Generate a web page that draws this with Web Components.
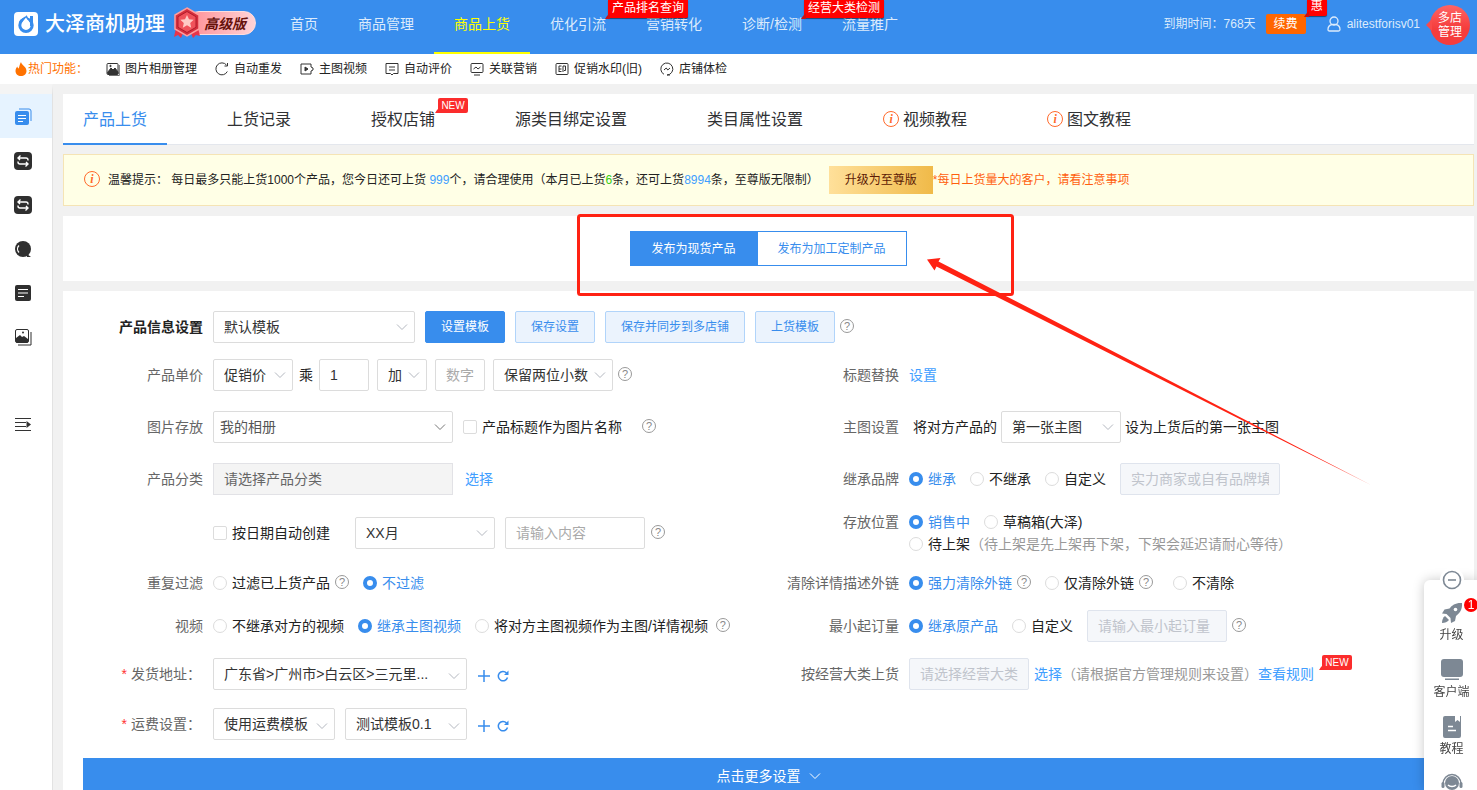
<!DOCTYPE html>
<html lang="zh-CN">
<head>
<meta charset="utf-8">
<title>大泽商机助理</title>
<style>
  html, body { margin: 0; height: 100%; overflow: hidden; }
  body {
    font: 14px/20px "Liberation Sans", "Noto Sans CJK SC", sans-serif;
    color: #222;
    background: #f1f1f1;
    --blue: #388ded;
    --link: #409eff;
    --line: #dcdcdc;
  }
</style>
</head>
<body>
<dz-app></dz-app>

<script>
const BASE = `
  *, *::before, *::after { box-sizing: border-box; }
  button, input, select { font: inherit; color: inherit; margin: 0; }
  button { cursor: pointer; border: 0; background: none; padding: 0; }
  a { color: inherit; text-decoration: none; }
  svg { display: block; flex: none; }
`;

function define(name, css, html, setup) {
  customElements.define(name, class extends HTMLElement {
    connectedCallback() {
      if (this.shadowRoot) return;
      const root = this.attachShadow({ mode: 'open' });
      const t = document.createElement('template');
      const body = typeof html === 'function' ? html(this) : html;
      t.innerHTML = `<style>${BASE}${css}</style>${body}`;
      root.append(t.content.cloneNode(true));
      if (setup) setup(this, root);
    }
  });
}

/* ---------- small parts ---------- */

define('dz-help', `
  :host { display: block; flex: none; width: 14px; height: 16px; }
  span { display: block; width: 14px; height: 14px; border: 1px solid #999; border-radius: 50%;
         font-size: 11px; line-height: 12px; text-align: center; color: #888; }
`, `<span title="帮助">?</span>`);

define('dz-info', `
  :host { display: block; flex: none; width: 16px; height: 18px; }
  span { display: block; width: 16px; height: 16px; border: 1px solid #ff6a2b; border-radius: 50%;
         font: italic bold 12px/14px "Liberation Serif", serif; text-align: center; color: #ff6a2b; }
`, `<span>i</span>`);

define('dz-flag', `
  :host { display: block; position: relative; padding: 0 4px; background: #f00; color: #fff; border-radius: 0 0 2px 0;
          font-size: 12px; line-height: 18px; white-space: nowrap; box-shadow: 0 1px 1px rgba(0,0,0,.5); }
  :host([new]) { background: #fb2c2c; border-radius: 2px; line-height: 15px; width: 30px; font-size: 10px; box-shadow: none; text-align: center; padding: 0; }
  i { position: absolute; left: -3px; bottom: -1px; border: 3px solid transparent; border-right-color: #c11; border-bottom-color: #c11; border-left-width: 2px; }
  :host([new]) i { border-right-color: #fb2c2c; border-bottom-color: #fb2c2c; z-index: -1; bottom: 0; }
  slot { position: relative; }
`, `<i></i><slot></slot>`);

define('dz-select', `
  :host { display: block; position: relative; flex: none; width: 120px; height: 32px; }
  select { appearance: none; width: 100%; height: 32px; padding: 0 0 0 10px; border: 1px solid var(--line);
           border-radius: 2px; background: #fff; color: #333; outline: 0; }
  svg { position: absolute; right: 7px; top: 10px; pointer-events: none; fill: none; stroke: #b4b8c0; }
  :host([low]) svg { top: 12px; }
  :host([album]) select { padding-left: 6px; color: #555; }
  :host([album]) svg { stroke: #777; }
`, el => `<select aria-label="${el.getAttribute('label')}"><option>${el.getAttribute('value')}</option></select>
  <svg width="12" height="12" viewBox="0 0 12 12"><path d="M1 3.5 6 8.5 11 3.5"/></svg>`);

define('dz-input', `
  :host { display: block; flex: none; width: 140px; height: 32px; }
  input { width: 100%; height: 32px; padding: 0 10px; border: 1px solid var(--line); border-radius: 2px; background: #fff; color: #333; outline: 0; }
  input::placeholder { color: #aaa; opacity: 1; }
  input:disabled { background: #f5f7fa; border-color: #dfe4ed; }
  input:disabled::placeholder { color: #c0c4cc; }
  :host([filled]) input { background: #f4f4f4; border-color: #e2e2e6; border-radius: 0; }
  :host([filled]) input::placeholder { color: #666; }
`, el => `<input type="text" aria-label="${el.getAttribute('label')}" value="${el.getAttribute('value') || ''}"
   placeholder="${el.getAttribute('placeholder') || ''}" ${el.hasAttribute('disabled') ? 'disabled' : ''}>`);

const choice = (type) => [`
  :host { display: block; flex: none; }
  label { display: flex; align-items: center; gap: 5px; white-space: nowrap; cursor: pointer; }
  input { appearance: none; flex: none; width: 14px; height: 14px; border: 1px solid var(--line); background: #fff;
          border-radius: ${type === 'radio' ? '50%' : '2px'}; }
  input:checked { border: 4px solid var(--blue); }
  input:checked + span { color: var(--blue); }
`, el => `<label><input type="${type}" ${el.hasAttribute('checked') ? 'checked' : ''}><span><slot></slot></span></label>`];

define('dz-check', ...choice('checkbox'));
define('dz-radio', ...choice('radio'), (el, root) => {
  root.querySelector('input').addEventListener('change', () => {
    for (const other of el.closest('dz-field').querySelectorAll('dz-radio'))
      if (other !== el) other.shadowRoot.querySelector('input').checked = false;
  });
});

define('dz-button', `
  :host { display: block; flex: none; }
  button { height: 32px; padding: 0 15px; border: 1px solid #b1d4fa; border-radius: 2px; background: #ebf3fd;
           color: var(--blue); font-size: 12px; line-height: 18px; white-space: nowrap; }
  :host([primary]) button { background: var(--blue); border-color: var(--blue); color: #fff; }
`, `<button type="button"><slot></slot></button>`);

define('dz-link', `
  :host { display: block; flex: none; color: var(--link); }
`, `<a href="#"><slot></slot></a>`);

define('dz-add', `
  :host { display: flex; gap: 6px; padding-top: 3px; }
  svg { fill: none; stroke: var(--blue); }
`, `<button type="button" aria-label="新增"><svg width="14" height="14" viewBox="0 0 14 14"><path stroke-width="1.500" d="M7 1v12M1 7h12"/></svg></button>
  <button type="button" aria-label="刷新"><svg width="12" height="14" viewBox="0 0 12 14"><path stroke-width="1.500" d="M10.500 8.500A4.700 4.700 0 1 1 9.500 4"/><path stroke="none" fill="#388ded" d="M11.500 1.500v4.500H7z"/></svg></button>`);

define('dz-field', `
  :host { display: block; min-width: 0; }
  .f { display: flex; align-items: center; height: 32px; }
  .l { flex: none; width: var(--label, 150px); padding-right: 10px; text-align: right; color: #666; white-space: nowrap; }
  :host([strong]) .l { font-weight: bold; color: #222; }
  :host([required]) .l { padding-right: 12px; }
  .l b { color: #f33; font-weight: normal; margin-right: 4px; }
  :host([double]) .f { align-items: flex-start; }
  :host([double]) .l { line-height: 22px; margin-top: -6px; }
  :host([double]) .c { margin-top: -6px; }
  .c { display: flex; align-items: center; white-space: nowrap; }
`, el => {
  const t = el.getAttribute('label') || '';
  const star = el.hasAttribute('required') ? '<b>*</b>' : '';
  return `<div class="f" role="group" aria-label="${t}"><div class="l">${star}${t}</div><div class="c"><slot></slot></div></div>`;
});

/* ---------- header ---------- */

define('dz-header', `
  :host { display: flex; align-items: center; height: 54px; background: var(--blue); color: #dcebfc; flex: none; }
  .logo { margin: 0 0 6px 14px; }
  h1 { margin: 0 0 6px 7px; font-size: 20px; line-height: 24px; font-weight: 500; color: #fff; white-space: nowrap; }
  .vip { display: flex; align-items: center; position: relative; margin: 0 0 8px 8px; width: 97px; height: 32px; flex: none; }
  .vip span { margin-left: 14px; padding: 0 9px 0 16px; height: 24px; border-radius: 12px; border: 1px solid #fdd;
    background: linear-gradient(90deg, #ff8f96, #ffd3d6); color: #66120c; font: italic bold 14px/22px "Noto Sans CJK SC", sans-serif; }
  .vip svg { position: absolute; left: 0; top: 0; }
  nav { display: flex; flex: none; height: 54px; }
  nav > div { position: relative; }
  nav a { display: block; padding: 0 20px; line-height: 48px; height: 54px; white-space: nowrap; }
  nav a.on { color: #ff0; border-bottom: 2px solid #ff0; }
  nav dz-flag { position: absolute; left: calc(100% - 18px); top: 0; z-index: 1; line-height: 16px; padding-bottom: 2px; }
  .right { display: flex; align-items: center; align-self: flex-start; margin-left: auto; font-size: 12px; height: 48px; white-space: nowrap; }
  .pay { position: relative; margin-left: 10px; }
  .pay button { display: block; width: 40px; height: 20px; border-radius: 2px; background: #f60; color: #fff; line-height: 20px; }
  .pay dz-flag { position: absolute; left: 41px; top: -14px; line-height: 12px; padding-bottom: 4px; }
  .user { display: flex; align-items: center; gap: 6px; margin-left: 21px; }
  .shops { position: relative; width: 40px; height: 40px; margin: 2px 7px 0 10px; border-radius: 50%; color: #fff; line-height: 14px;
    background: linear-gradient(#ff6464, #f53c3c 60%); }
  .shops::before { content: ""; position: absolute; left: -4px; top: 14px; border: 6px solid transparent; border-left: 0; border-right-color: #f94a4a; }
  .shops span { display: block; width: 24px; margin: 0 auto; white-space: normal; }
`, `
  <svg class="logo" width="24" height="24" viewBox="0 0 24 24"><rect width="24" height="24" rx="4" fill="#fff"/>
    <path d="M17.500 4v10" stroke="#388ded" stroke-width="3" fill="none"/><circle cx="12" cy="13.200" r="6.200" fill="none" stroke="#388ded" stroke-width="3"/><path d="M12 5c1.500 3 4 4.500 4 8a4 4 0 0 1-8 0c0-3.500 2.500-5 4-8z" fill="#fff"/><path d="M5.500 11C7 6.500 11 6 12.500 4.500l1.500 3" stroke="#388ded" stroke-width="1.500" fill="none"/></svg>
  <h1>大泽商机助理</h1>
  <div class="vip"><span>高级版</span>
    <svg width="28" height="32" viewBox="0 0 28 32"><path d="M3 21 1 30l4-2 3 3 3-7zM25 21l2 8-4-1-3 3-3-7z" fill="#e8354a"/>
      <path d="M14 1 26 8v14l-12 7L2 22V8z" fill="#d62f3d" stroke="#ff9d9d" stroke-width="1.500"/><path d="M14 4.500 23 9.700v10.600l-9 5.200-9-5.200V9.700z" fill="#f0525a" stroke="#b01c2a"/>
      <path d="m14 8 2 4.300 4.700.5-3.500 3.200 1 4.700-4.200-2.400-4.200 2.400 1-4.700-3.500-3.200 4.700-.5z" fill="#ffc9c4"/></svg></div>
  <nav>
    <div><a href="#">首页</a></div><div><a href="#">商品管理</a></div><div><a href="#" class="on">商品上货</a></div>
    <div><a href="#">优化引流</a><dz-flag>产品排名查询</dz-flag></div><div><a href="#">营销转化</a></div>
    <div><a href="#">诊断/检测</a><dz-flag>经营大类检测</dz-flag></div><div><a href="#">流量推广</a></div>
  </nav>
  <div class="right">
    <span>到期时间：768天</span>
    <div class="pay"><button type="button">续费</button><dz-flag>惠</dz-flag></div>
    <a class="user" href="#"><svg width="14" height="16" viewBox="0 0 14 16" fill="none" stroke="#dcebfc" stroke-width="1.300"><circle cx="7" cy="5" r="4"/><path d="M1 13.500C1 10.500 3 9 5 8.500h4c2 .5 4 2 4 5 0 1-.5 1.500-1.500 1.500h-9C1.500 15 1 14.500 1 13.500z"/></svg>alitestforisv01</a>
    <button class="shops" type="button"><span>多店管理</span></button>
  </div>`);

const QUICK = [
  ['图片相册管理', '<rect x="1" y="1.500" width="11" height="11" rx="1"/><path d="M1.500 10.500 5 6l2 2 2-2 3 4v2H2z" fill="#333"/><path d="M13.300 3v10.500H3"  stroke-width=".7"/><circle cx="4.500" cy="4" r=".7" fill="#333"/>'],
  ['自动重发', '<path d="M12.300 9.500a6 6 0 1 1-.8-6.500"/><path d="M12.500 1v3h-3"/>'],
  ['主图视频', '<path d="M1 5V2h10v3M1 9v3h10V9M1 5v4M11 5l2 1v2l-2 1"/><path d="M5 5v4l3-2z" fill="#333"/>'],
  ['自动评价', '<path d="M1 1.500h12v10H8.500L7 13l-1.500-1.500H1zM4 5h6M4 8h6"/>'],
  ['关联营销', '<rect x="1" y="1.500" width="12" height="9" rx="1"/><path d="M4 13h6M3.500 7 6 5l2 2 2.500-2"/>'],
  ['促销水印(旧)', '<rect x="1" y="1.500" width="12" height="11" rx="1"/><path d="M6.500 4H4v6M4 7h2.500M4 9.500h2.500M8 10V4h2.500v4.500H9"/>'],
  ['店铺体检', '<path d="M4 12.300A6 6 0 1 1 7 13h3M4 8l2.200-2 1.600 2L10 6"/>']
];

define('dz-quickbar', `
  :host { display: flex; align-items: center; height: 30px; background: #fff; font-size: 12px; color: #222; flex: none; gap: 18px; white-space: nowrap; }
  .hot { display: flex; align-items: center; gap: 1px; width: 73px; margin-left: 15px; color: #ff7200; }
  .item { display: flex; align-items: center; gap: 5px; }
  .item svg { fill: none; stroke: #333; }
`, `<span class="hot"><svg width="12" height="14" viewBox="0 0 12 14"><path fill="#ff7200" d="M6 0c.3 3 5.500 4.500 5.500 9 0 3-2.500 5-5.500 5S.5 12 .5 9C.5 6.800 1.500 5.500 2.500 4.500c0 1 .4 1.800 1 2C4.500 5 4.500 2 6 0z"/></svg>热门功能：</span>` +
  QUICK.map(([t, p]) => `<a class="item" href="#"><svg width="14" height="14" viewBox="0 0 14 14">${p}</svg>${t}</a>`).join(''));

/* ---------- side menu ---------- */

const SWAP = '<rect width="18" height="18" rx="4" fill="#2f2f2f"/><path d="M14 8.500V8a2 2 0 0 0-2-2H4M6.500 3.500 4 6l2 2M4 9.500v.5a2 2 0 0 0 2 2h8M12 10l2 2-2.500 2.500" fill="none" stroke="#fff" stroke-width="1.400"/>';
const SIDE = [
  ['产品上货', '<path d="M5 1h10a2 2 0 0 1 2 2v10" fill="none" stroke="#388ded"/><rect x="1" y="3" width="14" height="14" rx="2" fill="#388ded"/><path d="M4 7.500h8M4 10.500h8M4 13.500h5" stroke="#fff"/>'],
  ['店铺搬家', SWAP], ['店铺同步', SWAP],
  ['搜索', '<circle cx="9" cy="9" r="8" fill="#2f2f2f"/><path d="M13 14l4 3h-4z" fill="#2f2f2f"/><path d="M5 5.500a5 5 0 0 0 0 7" fill="none" stroke="#fff" stroke-width="1.300"/>'],
  ['记录', '<rect x="1" y="1" width="16" height="16" rx="2" fill="#2f2f2f"/><path d="M4 5.500h10M4 9h10M4 12.500h6" stroke="#fff" stroke-width="1.200"/>'],
  ['图片', '<rect x="1.500" y="1.500" width="13" height="13" rx="1.500" fill="#fff" stroke="#2f2f2f"/><path d="M2 14V10l4-3 2 2 2-1 4 3v3.500H2z" fill="#2f2f2f"/><circle cx="9" cy="4.500" r="1" fill="#2f2f2f"/><path d="M4 17h13V4" fill="none" stroke="#2f2f2f"/>']
];

define('dz-sidebar', `
  :host { display: block; flex: none; width: 53px; background: #fff; border-right: 1px solid #e2e2e2; border-top: 10px solid #f4f4f4; }
  a { display: flex; align-items: center; height: 44px; padding: 2px 0 0 14px; }
  a.on { background: #e6f3ff; }
  button { display: block; margin: 58px 0 0 14px; }
`, SIDE.map(([t, p], i) => `<a href="#" aria-label="${t}" class="${i ? '' : 'on'}"><svg width="18" height="18" viewBox="0 0 18 18">${p}</svg></a>`).join('') +
  `<button type="button" aria-label="展开菜单"><svg width="18" height="18" viewBox="0 0 18 18"><path d="M1 2.500h16M1 6.500h11M1 10.500h11M1 14.500h16" stroke="#333"/><path d="M12.500 5v7L17 8.500z" fill="#333"/></svg></button>`);

/* ---------- main column ---------- */

define('dz-tabs', `
  :host { display: flex; gap: 40px; height: 51px; background: #fff; border-bottom: 1px solid #e4e7ed; font-size: 16px; }
  a { position: relative; display: flex; align-items: center; gap: 4px; height: 51px; padding: 0 20px; color: #303133; white-space: nowrap; }
  a.on { color: var(--blue); border-bottom: 2px solid var(--blue); padding-top: 2px; }
  dz-flag { position: absolute; left: calc(100% - 17px); top: 4px; z-index: 0; }
`, `<a href="#" class="on">产品上货</a><a href="#">上货记录</a><a href="#">授权店铺<dz-flag new>NEW</dz-flag></a><a href="#">源类目绑定设置</a>
  <a href="#">类目属性设置</a><a href="#"><dz-info></dz-info>视频教程</a><a href="#"><dz-info></dz-info>图文教程</a>`);

define('dz-notice', `
  :host { display: flex; align-items: center; height: 52px; margin-top: 9px; padding-left: 20px; background: #ffffe6; border: 1px solid #f5e4b5; font-size: 12px; white-space: nowrap; }
  p { margin: 0 10px 0 8px; }
  .b { color: var(--link); } .g { color: #3c1; }
  button { height: 28px; padding: 0 16px; background: linear-gradient(90deg, #ffe09a, #f0ba49); color: #5c1a05; }
  em { font-style: normal; color: #ff5f0f; }
`, `<dz-info></dz-info><p>温馨提示： 每日最多只能上货1000个产品，您今日还可上货 <span class="b">999</span>个，请合理使用（本月已上货<span class="g">6</span>条，还可上货<span class="b">8994</span>条，至尊版无限制）</p>
  <button type="button">升级为至尊版</button><em>*每日上货量大的客户，请看注意事项</em>`);

define('dz-mode', `
  :host { display: flex; justify-content: center; align-items: center; height: 65px; margin-top: 10px; background: #fff; }
  button { height: 35px; padding: 0 20px; border: 1px solid var(--blue); font-size: 12px; color: var(--blue); background: #fff; }
  button.on { background: var(--blue); color: #fff; }
`, `<button type="button" class="on">发布为现货产品</button><button type="button">发布为加工定制产品</button>`);

define('dz-form', `
  :host { display: block; margin-top: 10px; padding: 20px 0; background: #fff; }
  .row { display: grid; grid-template-columns: 1fr 1fr; column-gap: 1px; margin-bottom: 16px; }
  .row > :nth-child(2) { --label: 140px; }
  .g11 { margin-bottom: 11px; } .g18 { margin-bottom: 18px; } .g20 { margin-bottom: 20px; } .g22 { margin-bottom: 22px; }
  .w50 { width: 50px; } .w80 { width: 80px; } .w122 { width: 122px; } .w140 { width: 140px; } .w160 { width: 160px; }
  .w202 { width: 202px; } .w240 { width: 240px; } .w254 { width: 254px; } .w120 { width: 120px; }
  .m4 { margin-left: 4px; } .m5 { margin-left: 5px; } .m6 { margin-left: 6px; } .m8 { margin-left: 8px; } .m10 { margin-left: 10px; }
  .m12 { margin-left: 12px; } .m14 { margin-left: 14px; } .m20 { margin-left: 20px; } .m25 { margin-left: 25px; }
  .note { color: #999; }
  .lines { display: block; }
  .lines div { display: flex; align-items: center; height: 22px; }
  .rule { position: relative; }
  .rule dz-flag { position: absolute; left: calc(100% + 8px); top: -9px; z-index: 0; }
  .more { display: flex; align-items: center; justify-content: center; gap: 8px; width: calc(100% - 40px); height: 36px; margin: 0 20px; background: var(--blue); color: #fff; }
`, `
  <div class="row"><dz-field label="产品信息设置" strong>
    <dz-select class="w202" label="模板" value="默认模板"></dz-select><dz-button class="m10" primary>设置模板</dz-button><dz-button class="m10">保存设置</dz-button>
    <dz-button class="m10">保存并同步到多店铺</dz-button><dz-button class="m10">上货模板</dz-button><dz-help class="m5"></dz-help></dz-field></div>
  <div class="row g20"><dz-field label="产品单价">
    <dz-select class="w80" label="价格类型" value="促销价"></dz-select><span class="m6">乘</span><dz-input class="w50 m6" label="倍数" value="1"></dz-input>
    <dz-select class="w50 m8" label="加减" value="加"></dz-select><dz-input class="w50 m8" label="加价" placeholder="数字"></dz-input>
    <dz-select class="w120 m8" label="小数位" value="保留两位小数"></dz-select><dz-help class="m5"></dz-help></dz-field>
    <dz-field label="标题替换"><dz-link>设置</dz-link></dz-field></div>
  <div class="row g20"><dz-field label="图片存放">
    <dz-select class="w240" album label="相册" value="我的相册"></dz-select><dz-check class="m10">产品标题作为图片名称</dz-check><dz-help class="m20"></dz-help></dz-field>
    <dz-field label="主图设置"><span class="m4">将对方产品的</span>
    <dz-select class="w120 m4" label="主图" value="第一张主图"></dz-select><span class="m4">设为上货后的第一张主图</span></dz-field></div>
  <div class="row g22"><dz-field label="产品分类"><dz-input class="w240" filled disabled label="产品分类" placeholder="请选择产品分类"></dz-input><dz-link class="m12">选择</dz-link></dz-field>
    <dz-field label="继承品牌"><dz-radio checked>继承</dz-radio><dz-radio class="m14">不继承</dz-radio><dz-radio class="m14">自定义</dz-radio>
    <dz-input class="w160 m14" disabled label="自定义品牌" placeholder="实力商家或自有品牌填"></dz-input></dz-field></div>
  <div class="row g18"><dz-field><dz-check>按日期自动创建</dz-check><dz-select class="w140 m25" label="日期" value="XX月"></dz-select>
    <dz-input class="m10" label="内容" placeholder="请输入内容"></dz-input><dz-help class="m6"></dz-help></dz-field>
    <dz-field label="存放位置" double><div class="lines"><div><dz-radio checked>销售中</dz-radio><dz-radio class="m14">草稿箱(大泽)</dz-radio></div>
    <div><dz-radio>待上架</dz-radio><span class="note">（待上架是先上架再下架，下架会延迟请耐心等待）</span></div></div></dz-field></div>
  <div class="row g11"><dz-field label="重复过滤"><dz-radio>过滤已上货产品</dz-radio><dz-help class="m5"></dz-help><dz-radio class="m14" checked>不过滤</dz-radio></dz-field>
    <dz-field label="清除详情描述外链"><dz-radio checked>强力清除外链</dz-radio><dz-help class="m5"></dz-help><dz-radio class="m14">仅清除外链</dz-radio><dz-help class="m5"></dz-help><dz-radio class="m20">不清除</dz-radio></dz-field></div>
  <div class="row"><dz-field label="视频"><dz-radio>不继承对方的视频</dz-radio><dz-radio class="m14" checked>继承主图视频</dz-radio><dz-radio class="m14">将对方主图视频作为主图/详情视频</dz-radio><dz-help class="m8"></dz-help></dz-field>
    <dz-field label="最小起订量"><dz-radio checked>继承原产品</dz-radio><dz-radio class="m14">自定义</dz-radio><dz-input class="m14" disabled label="最小起订量" placeholder="请输入最小起订量"></dz-input><dz-help class="m5"></dz-help></dz-field></div>
  <div class="row g18"><dz-field label="发货地址：" required><dz-select class="w254" low label="发货地址" value="广东省>广州市>白云区>三元里..."></dz-select><dz-add class="m10"></dz-add></dz-field>
    <dz-field label="按经营大类上货"><dz-input class="w120" disabled label="经营大类" placeholder="请选择经营大类"></dz-input><dz-link class="m5">选择</dz-link><span class="note">（请根据官方管理规则来设置）</span>
    <div class="rule"><dz-link>查看规则</dz-link><dz-flag new>NEW</dz-flag></div></dz-field></div>
  <div class="row g18"><dz-field label="运费设置：" required><dz-select class="w122" low label="运费方式" value="使用运费模板"></dz-select><dz-select class="w122 m10" low label="运费模板" value="测试模板0.1"></dz-select><dz-add class="m10"></dz-add></dz-field></div>
  <button class="more" type="button">点击更多设置<svg width="12" height="12" viewBox="0 0 12 12" fill="none" stroke="#fff"><path d="M1 3.500 6 8.500 11 3.500"/></svg></button>`);

/* ---------- floating tools ---------- */

define('dz-float', `
  :host { position: fixed; right: 0; top: 580px; bottom: 0; width: 53px; z-index: 5; background: #fff; border-radius: 6px 0 0 0;
          box-shadow: 0 0 12px rgba(0,0,0,.22); font-size: 12px; line-height: 16px; color: #444; }
  .min { position: absolute; left: 16px; top: -12px; width: 24px; height: 24px; padding: 2px; border-radius: 50%; background: #fff; }
  .list { height: 100%; overflow: hidden; padding-top: 21px; }
  .list a { display: block; height: 57px; text-align: center; padding-left: 2px; }
  .list svg { margin: 0 auto 2px; }
  .n { position: absolute; right: -1px; top: 18px; width: 14px; height: 14px; border-radius: 50%; background: #f00; color: #fff; line-height: 14px; text-align: center; }
`, `<button class="min" type="button" aria-label="收起"><svg width="20" height="20" viewBox="0 0 20 20" fill="none" stroke="#7d8894" stroke-width="1.600"><circle cx="10" cy="10" r="8.500"/><path d="M6 10h8"/></svg></button>
  <div class="list">
  <a href="#"><svg width="24" height="24" viewBox="0 0 24 24" fill="#7d8894"><path d="M22 2c.5 6-2 10-6 13l-1 5-4 2-.5-5-4-4L2 12.500l2.500-4 5-1C12 4 16 1.500 22 2z"/><circle cx="15.500" cy="8.500" r="1.800" fill="#fff"/><path d="M5 15l4 4c-1.500 2-4 3-7 3 0-3 1-5.500 3-7z"/></svg>升级</a>
  <a href="#"><svg width="24" height="24" viewBox="0 0 24 24" fill="#7d8894"><rect x="1" y="1" width="22" height="18" rx="3"/><path d="M5 20.500h14v1.500H5z"/></svg>客户端</a>
  <a href="#"><svg width="24" height="24" viewBox="0 0 24 24" fill="#7d8894"><path d="M3 3a2 2 0 0 1 2-2h10v6l2.500-2L20 7V1h1v20a2 2 0 0 1-2 2H5a2 2 0 0 1-2-2z"/><path d="M8 11.500h5M8 15.500h8" stroke="#fff" stroke-width="1.500"/></svg>教程</a>
  <a href="#" aria-label="客服"><svg width="24" height="24" viewBox="0 0 24 24" fill="#7d8894"><circle cx="12" cy="11" r="7"/><path d="M3 12a9 9.500 0 0 1 18 0" fill="none" stroke="#7d8894" stroke-width="1.500"/><rect x="1.500" y="10" width="3" height="6" rx="1.500"/><rect x="19.500" y="10" width="3" height="6" rx="1.500"/><path d="M8 13c2 2 6 2 8 0" stroke="#fff" fill="none" stroke-width="1.500"/></svg></a>
  </div><span class="n">1</span>`);

/* Red box and arrow that point out the publish-mode switch. */
define('dz-callout', `
  :host { position: absolute; left: 50%; top: 210px; margin-left: -162px; z-index: 4; pointer-events: none; }
`, `<svg width="800" height="280" viewBox="577 210 800 280"><rect x="578.500" y="215.500" width="434" height="79" rx="2" fill="none" stroke="#ff2213" stroke-width="3"/>
  <path fill="#ff2213" d="M927 259.500 940.500 258 938.500 261.500 1040 313.500 1371 485 1038 317.500 936.500 266.500 934.500 270.500z"/></svg>`);

define('dz-app', `
  :host { display: flex; flex-direction: column; height: 100vh; position: relative; overflow: hidden; }
  .body { display: flex; flex: 1; min-height: 0; }
  main { flex: 1; min-width: 0; padding: 10px 3px 0 10px; overflow: auto; scrollbar-width: none; }
`, `<dz-header></dz-header><dz-quickbar></dz-quickbar>
  <div class="body"><dz-sidebar></dz-sidebar><main><dz-tabs></dz-tabs><dz-notice></dz-notice><dz-mode></dz-mode><dz-form></dz-form></main></div>
  <dz-callout></dz-callout><dz-float></dz-float>`);
</script>
</body>
</html>
